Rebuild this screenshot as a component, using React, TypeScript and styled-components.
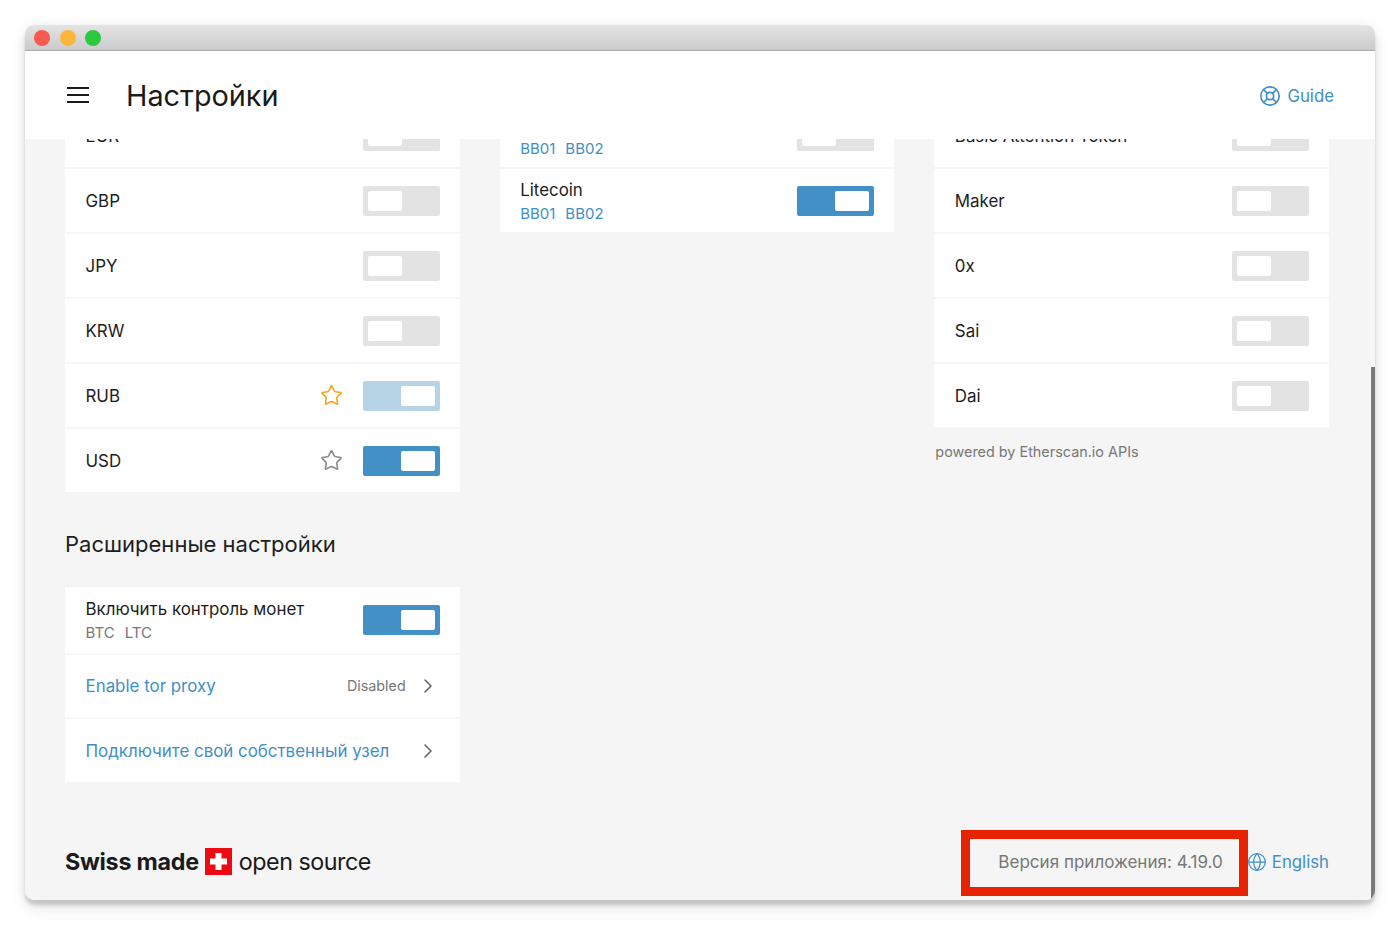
import React from "react";
import styled, { createGlobalStyle } from "styled-components";
import { ChevronRight, Globe, LifeBuoy, Star } from "lucide-react";

const Global = createGlobalStyle`
  html, body { margin: 0; padding: 0; background: #fff; }
  body { font-family: Inter, "Noto Sans", sans-serif; color: #1d1d1d; -webkit-font-smoothing: antialiased; }
  * { box-sizing: border-box; }
`;

const Page = styled.div`
  width: 1400px;
  height: 925px;
  padding: 25px;
  overflow: hidden;
`;

const Window = styled.div`
  position: relative;
  width: 1350px;
  height: 875px;
  display: flex;
  flex-direction: column;
  background: #f5f5f5;
  border-radius: 9px;
  overflow: hidden;
`;

const Shadow = styled.div`
  border-radius: 9px;
  box-shadow: 0 5px 3px rgba(0, 0, 0, 0.13), 0 8px 10px rgba(0, 0, 0, 0.06), 0 8px 22px rgba(0, 0, 0, 0.06), 0 0 12px rgba(0, 0, 0, 0.05);
`;

const TitleBar = styled.div`
  flex: none;
  height: 26px;
  display: flex;
  align-items: center;
  gap: 9.5px;
  padding: 0 0 0 9px;
  background: linear-gradient(#e4e4e4, #cbcbcb);
  border-bottom: 1px solid #a9a9a9;
`;

const Light = styled.span<{ $c: string }>`
  width: 16px;
  height: 16px;
  border-radius: 50%;
  background: ${(p) => p.$c};
`;

const Header = styled.header`
  flex: none;
  height: 88px;
  display: flex;
  align-items: center;
  justify-content: space-between;
  padding: 1px 41px 0 42px;
  background: #fff;
  position: relative;
  z-index: 1;
`;

const HeaderLeft = styled.div`
  display: flex;
  align-items: center;
  gap: 37px;
`;

const BurgerIcon = styled.svg`
  display: block;
  margin-top: -1px;
`;

const Title = styled.h1`
  margin: 0;
  font-size: 28.8px;
  font-weight: 400;
  line-height: 34px;
  color: #1a1a1a;
`;

const Link = styled.a<{ $gap: number }>`
  display: flex;
  align-items: center;
  color: #3f8fc5;
  font-size: 16.8px;
  line-height: 22px;
  gap: ${(p) => p.$gap}px;
`;

const Scroll = styled.div`
  flex: 1;
  min-height: 0;
  overflow: hidden;
  padding: 0 46px 0 40px;
`;

const Columns = styled.div`
  margin-top: -37px;
  display: grid;
  grid-template-columns: repeat(3, 1fr);
  gap: 40px;
  align-items: start;
`;

const Card = styled.div`
  background: #fff;
`;

const Row = styled.div<{ $h?: number; $flush?: boolean }>`
  height: ${(p) => p.$h ?? 65}px;
  display: flex;
  align-items: center;
  padding: 0 20px 0 20.5px;
  border-top: ${(p) => (p.$flush ? "0" : "2px solid #f6f6f6")};
`;

const RowText = styled.div<{ $lift?: number }>`
  flex: 1;
  min-width: 0;
  display: flex;
  flex-direction: column;
  padding-bottom: ${(p) => p.$lift ?? 0}px;
`;

const Label = styled.div`
  font-size: 16.9px;
  line-height: 24px;
  color: #1d1d1d;
`;

const LinkLabel = styled(Label)`
  color: #3f8fc5;
`;

const Subs = styled.div<{ $blue?: boolean }>`
  display: flex;
  gap: 10px;
  font-size: 15px;
  line-height: 19px;
  margin-top: ${(p) => (p.$blue ? 1.5 : 2)}px;
  color: ${(p) => (p.$blue ? "#3f8fc5" : "#777")};
`;

const Toggle = styled.div<{ $on?: boolean; $pending?: boolean }>`
  width: 77px;
  height: 30px;
  flex: none;
  border-radius: 2px;
  padding: 5px;
  display: flex;
  justify-content: ${(p) => (p.$on ? "flex-end" : "flex-start")};
  background: ${(p) => (p.$pending ? "#b7d4e7" : p.$on ? "#4290c6" : "#e3e3e3")};
`;

const Knob = styled.span`
  width: 34px;
  height: 20px;
  border-radius: 2px;
  background: #fff;
`;

const StarWrap = styled.span<{ $c: string }>`
  display: flex;
  margin-right: 20px;
  color: ${(p) => p.$c};
`;

const Value = styled.span`
  font-size: 14.3px;
  color: #777;
  margin-right: 10px;
  padding-bottom: 2px;
`;

const Chevron = styled.span`
  display: flex;
  color: #666;
`;

const SectionTitle = styled.h2`
  margin: 39px 0 29px;
  font-size: 22px;
  line-height: 27px;
  font-weight: 400;
  color: #1d1d1d;
`;

const Note = styled.p`
  margin: 15px 0 0 1px;
  font-size: 14.4px;
  line-height: 19px;
  color: #777;
`;

const Footer = styled.footer`
  flex: none;
  height: 76px;
  padding: 0 46px 0 40px;
  display: flex;
  align-items: center;
  justify-content: space-between;
`;

const Brand = styled.div`
  display: flex;
  align-items: center;
  gap: 6.5px;
  font-size: 23.3px;
  line-height: 28px;
  color: #1a1a1a;
`;

const Strong = styled.span`
  font-weight: 700;
  letter-spacing: -0.25px;
`;

const Regular = styled.span`
  letter-spacing: -0.5px;
`;

const FlagIcon = styled.svg`
  display: block;
  margin-top: -1px;
`;

const FooterRight = styled.div`
  display: flex;
  align-items: center;
  gap: 24px;
`;

const Version = styled.div`
  position: relative;
  font-size: 17.05px;
  line-height: 22px;
  color: #777;
`;

const Highlight = styled.span`
  position: absolute;
  left: -37px;
  right: -25px;
  top: -21px;
  bottom: -23px;
  border: 9.5px solid #e62200;
`;

const ScrollThumb = styled.div`
  position: absolute;
  right: 0;
  bottom: 0;
  width: 4px;
  height: 533px;
  background: #7a7a7a;
`;

const ToggleSw = ({ on, pending }: { on?: boolean; pending?: boolean }) => (
  <Toggle $on={on} $pending={pending}>
    <Knob />
  </Toggle>
);

const Flag = () => (
  <FlagIcon width="27" height="27" viewBox="0 0 27 27" aria-hidden>
    <rect width="27" height="27" fill="#ed0a12" />
    <rect x="10.5" y="5" width="6" height="17" fill="#fff" />
    <rect x="5" y="10.5" width="17" height="6" fill="#fff" />
  </FlagIcon>
);

const Burger = () => (
  <BurgerIcon width="22" height="16" viewBox="0 0 22 16" aria-hidden>
    <rect y="0" width="22" height="2" fill="#1a1a1a" />
    <rect y="7" width="22" height="2" fill="#1a1a1a" />
    <rect y="14" width="22" height="2" fill="#1a1a1a" />
  </BurgerIcon>
);

const Simple = ({ label, star, on, pending }: { label: string; star?: string; on?: boolean; pending?: boolean }) => (
  <Row>
    <RowText>
      <Label>{label}</Label>
    </RowText>
    {star && (
      <StarWrap $c={star}>
        <Star size={23} strokeWidth={1.7} />
      </StarWrap>
    )}
    <ToggleSw on={on} pending={pending} />
  </Row>
);

const Coin = ({ label, on }: { label: string; on?: boolean }) => (
  <Row>
    <RowText $lift={0.5}>
      <Label>{label}</Label>
      <Subs $blue>
        <span>BB01</span>
        <span>BB02</span>
      </Subs>
    </RowText>
    <ToggleSw on={on} />
  </Row>
);

export default function App() {
  return (
    <Page>
      <Global />
      <Shadow>
        <Window>
          <TitleBar>
            <Light $c="#f85a50" />
            <Light $c="#fdb53a" />
            <Light $c="#2bc940" />
          </TitleBar>
          <Header>
            <HeaderLeft>
              <Burger />
              <Title>Настройки</Title>
            </HeaderLeft>
            <Link $gap={6}>
              <LifeBuoy size={22} strokeWidth={1.8} />
              Guide
            </Link>
          </Header>
          <Scroll>
            <Columns>
              <div>
                <Card>
                  <Simple label="EUR" />
                  <Simple label="GBP" />
                  <Simple label="JPY" />
                  <Simple label="KRW" />
                  <Simple label="RUB" star="#f5a623" on pending />
                  <Simple label="USD" star="#8c8c8c" on />
                </Card>
                <SectionTitle>Расширенные настройки</SectionTitle>
                <Card>
                  <Row $h={66} $flush>
                    <RowText $lift={1}>
                      <Label>Включить контроль монет</Label>
                      <Subs>
                        <span>BTC</span>
                        <span>LTC</span>
                      </Subs>
                    </RowText>
                    <ToggleSw on />
                  </Row>
                  <Row $h={64}>
                    <RowText>
                      <LinkLabel>Enable tor proxy</LinkLabel>
                    </RowText>
                    <Value>Disabled</Value>
                    <Chevron>
                      <ChevronRight size={24} strokeWidth={1.6} />
                    </Chevron>
                  </Row>
                  <Row>
                    <RowText>
                      <LinkLabel>Подключите свой собственный узел</LinkLabel>
                    </RowText>
                    <Chevron>
                      <ChevronRight size={24} strokeWidth={1.6} />
                    </Chevron>
                  </Row>
                </Card>
              </div>
              <Card>
                <Coin label="Bitcoin" />
                <Coin label="Litecoin" on />
              </Card>
              <div>
                <Card>
                  <Simple label="Basic Attention Token" />
                  <Simple label="Maker" />
                  <Simple label="0x" />
                  <Simple label="Sai" />
                  <Simple label="Dai" />
                </Card>
                <Note>powered by Etherscan.io APIs</Note>
              </div>
            </Columns>
          </Scroll>
          <Footer>
            <Brand>
              <Strong>Swiss made</Strong>
              <Flag />
              <Regular>open source</Regular>
            </Brand>
            <FooterRight>
              <Version>
                Версия приложения: 4.19.0
                <Highlight />
              </Version>
              <Link $gap={5}>
                <Globe size={20} strokeWidth={1.5} />
                English
              </Link>
            </FooterRight>
          </Footer>
          <ScrollThumb />
        </Window>
      </Shadow>
    </Page>
  );
}
